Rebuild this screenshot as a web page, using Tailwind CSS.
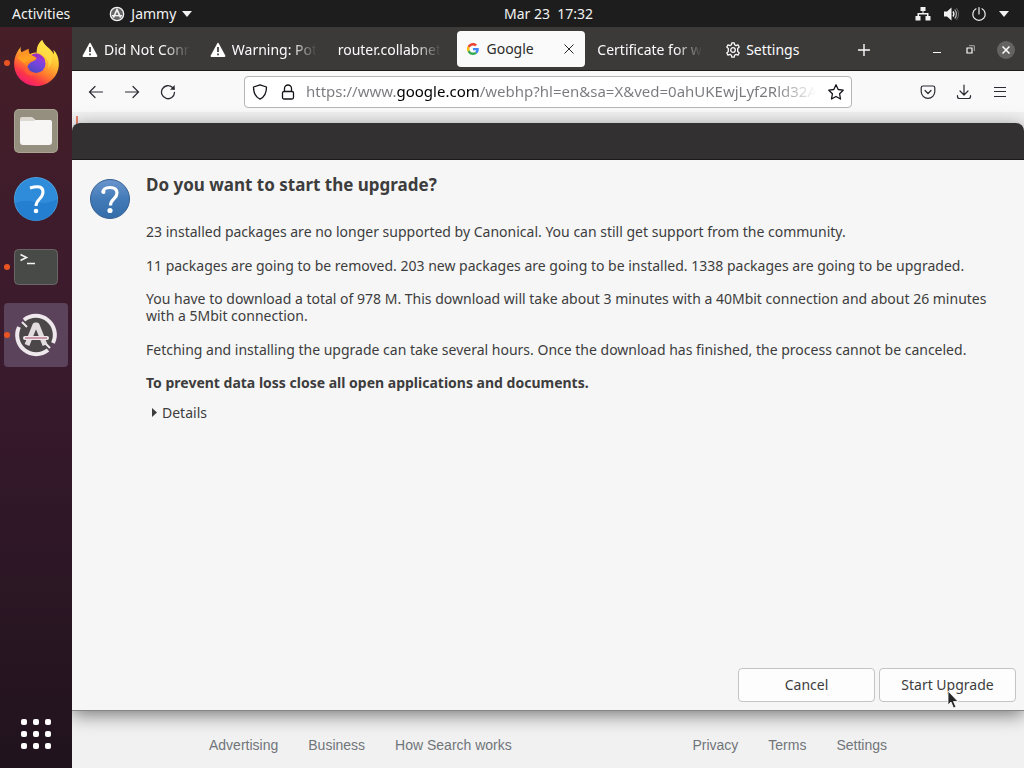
<!DOCTYPE html>
<html lang="en">
<head>
  <meta charset="UTF-8" />
  <meta name="viewport" content="width=device-width, initial-scale=1" />
  <title>Jammy upgrade</title>
  <script src="https://cdn.jsdelivr.net/npm/@tailwindcss/browser@4"></script>
</head>
<body class="flex h-screen flex-col overflow-hidden bg-[#1d1d1d] font-['Noto_Sans',sans-serif] text-sm text-[#3d3d3d]">

  <!-- Top panel -->
  <header class="relative flex h-[27px] shrink-0 items-center justify-between bg-[#1d1d1d] px-3 text-[#f2f2f2]">
    <div class="flex items-center gap-[39px]">
      <button>Activities</button>
      <button class="flex items-center gap-1.5">
        <svg class="size-4" viewBox="0 0 48 48" fill="none" stroke="currentColor">
          <circle cx="24" cy="24" r="20" fill="#666" stroke-width="4" />
          <path d="M13 35 24 11l11 24" stroke-width="5" />
          <path d="M9 29h30" stroke-width="4" />
        </svg>
        <span>Jammy</span>
        <svg class="h-[6px] w-[10px]" viewBox="0 0 10 6" fill="currentColor"><path d="M0 0h10L5 6z" /></svg>
      </button>
    </div>
    <button class="absolute left-1/2 -translate-x-1/2 whitespace-pre pl-[73px]">Mar 23  17:32</button>
    <div class="flex items-center gap-3 pr-[3px]">
      <svg class="size-4" viewBox="0 0 16 16" fill="currentColor" aria-label="Network">
        <path d="M5.500 1h5v4h-2v2h5v3h2v4.500h-5V10H12V8.500H4V10h1.500v4.500h-5V10h2V7h5V5h-2z" />
      </svg>
      <svg class="size-4" viewBox="0 0 16 16" aria-label="Volume">
        <path d="M1 5.500h3L8.500 1.500v13L4 10.500H1z" fill="currentColor" />
        <path d="M10 5.500q1.800 2.500 0 5" fill="none" stroke="currentColor" stroke-width="1.400" />
        <path d="M11.800 3.500q3.200 4.500 0 9" fill="none" stroke="#bbb" stroke-width="1.200" />
        <path d="M13.500 2q4 6 0 12" fill="none" stroke="#666" />
      </svg>
      <svg class="size-4" viewBox="0 0 16 16" fill="none" stroke="currentColor" stroke-width="1.200" stroke-linecap="round" aria-label="Power">
        <path d="M8 1.500V8M5 2.800a6.200 6.200 0 1 0 6 0" />
      </svg>
      <svg class="h-[6px] w-[10px]" viewBox="0 0 10 6" fill="currentColor"><path d="M0 0h10L5 6z" /></svg>
    </div>
  </header>

  <div class="flex min-h-0 flex-1">
    <!-- Dock -->
    <nav class="flex w-[72px] shrink-0 flex-col items-center justify-between bg-linear-to-b from-[#451e27] via-[#3a1a2e] via-45% to-[#20131d] pt-1 pb-4">
      <div class="flex flex-col gap-1">
        <button class="relative flex size-16 items-center justify-center" aria-label="Firefox">
          <span class="absolute top-[29px] left-0 size-[6px] rounded-full bg-[#e95420]"></span>
          <svg class="h-[46px] w-[45px]" viewBox="0 0 134 138">
            <defs>
              <linearGradient id="fx" x1="0.85" y1="0.1" x2="0.35" y2="0.98">
                <stop offset="0" stop-color="#fff14a" />
                <stop offset="0.35" stop-color="#ffc132" />
                <stop offset="0.65" stop-color="#ff762d" />
                <stop offset="0.85" stop-color="#fc354a" />
                <stop offset="1" stop-color="#f5206a" />
              </linearGradient>
              <linearGradient id="ball" x1="0.8" y1="0" x2="0.3" y2="1">
                <stop offset="0" stop-color="#b033d8" />
                <stop offset="0.5" stop-color="#7446dc" />
                <stop offset="1" stop-color="#4d47bd" />
              </linearGradient>
              <linearGradient id="head" x1="0.2" y1="0" x2="0.5" y2="1">
                <stop offset="0" stop-color="#ff8a25" />
                <stop offset="0.6" stop-color="#ffa321" />
                <stop offset="1" stop-color="#ff652c" />
              </linearGradient>
            </defs>
            <path fill="url(#fx)" d="M20 20C6 37 0 54 0 73c0 37 30 65 67 65s67-29 67-66c0-19-6-34-17-43 2 6 3 10 2 14C112 26 92 20 84 0 72 10 67 24 68 38c-10-1-18 2-24 7l-22-8c-3-5-3-11-2-17z" />
            <path fill="#ffe04a" d="M84 0C72 10 67 25 68 38c9 1 16 4 21 10 13 10 17 24 13 38 16-20 14-38 7-49C101 24 88 14 84 0z" opacity=".65" />
            <circle cx="66" cy="71" r="28" fill="url(#ball)" />
            <path fill="#9a30c6" d="M50 47c12-13 37-5 43 15-9-9-19-9-28-6-9-1-14-4-15-9z" />
            <path fill="url(#head)" d="M9 55c5-9 11-17 16-20 6-3 11-6 19-9-1 7 1 12 3 16 7 5 15 8 20 11-1 8-8 9-16 13-5 3-10 9-13 19-4-13-14-20-29-30z" />
            <path fill="#ff6a2c" d="M38 80c4 16 19 24 36 20-9 8-31 10-41-3-4-6-1-13 5-17z" opacity=".5" />
          </svg>
        </button>
        <button class="flex size-16 items-center justify-center" aria-label="Files">
          <svg class="size-11" viewBox="0 0 44 44">
            <rect width="44" height="44" rx="5" fill="#aaa592" />
            <rect x="1" y="1" width="42" height="42" rx="4" fill="#948f7f" />
            <path d="M6 10q0-2 2-2h9q2 0 3 1.500l2 2H37v18H6z" fill="#ddd9d0" />
            <path d="M6 12h13l3-1h14q2 0 2 2v20q0 3-3 3H9q-3 0-3-3z" fill="#f8f6f5" />
          </svg>
        </button>
        <button class="flex size-16 items-center justify-center" aria-label="Help">
          <svg class="size-11" viewBox="0 0 44 44">
            <circle cx="22" cy="22" r="22" fill="#4fa6e6" />
            <circle cx="22" cy="22.500" r="21.200" fill="#257fd0" />
            <path d="M1 22a21 21 0 0 1 42 0q-11 6-22 3T1 26z" fill="#2f8cdb" />
            <path d="M16 11q13-4 13 4c0 7-7 7-7 14" fill="none" stroke="#fff" stroke-width="3" />
            <circle cx="22" cy="34" r="2.300" fill="#fff" />
          </svg>
        </button>
        <button class="relative flex size-16 items-center justify-center" aria-label="Terminal">
          <span class="absolute top-[29px] left-0 size-[6px] rounded-full bg-[#e95420]"></span>
          <svg class="h-9 w-11" viewBox="0 0 44 36" fill="none">
            <rect x=".5" y=".5" width="43" height="35" rx="4" fill="#484a48" stroke="#6a6667" />
            <path d="m6.500 5.500 6 3-6 3M13 14.500h8" stroke="#f3f3f3" stroke-width="1.600" />
          </svg>
        </button>
        <button class="relative flex size-16 items-center justify-center rounded bg-[#5b435b]" aria-label="Software Updater">
          <span class="absolute top-[29px] left-0 size-[6px] rounded-full bg-[#e95420]"></span>
          <svg class="size-11" viewBox="0 0 44 44" fill="none">
            <circle cx="22" cy="22" r="18" fill="#4b4749" />
            <path d="M10 7a19 19 0 0 1 29 23M34 37A19 19 0 0 1 5 14" stroke="#eee8ec" stroke-width="4" />
            <path d="m8 9 5 5M36 35l-5-5" stroke="#eee8ec" stroke-width="2" />
            <path d="m13 32 8-20h2l8 20" stroke="#e2dcdf" stroke-width="5" stroke-linejoin="round" />
            <path d="M11 25h22" stroke="#eee8ec" stroke-width="4" stroke-linecap="round" />
            <path d="M11 25h22" stroke="#a8475c" />
          </svg>
        </button>
      </div>
      <button class="grid grid-cols-3 gap-[6px] p-[3px]" aria-label="Show Applications">
        <span class="size-[6px] rounded-[2px] bg-white"></span>
        <span class="size-[6px] rounded-[2px] bg-white"></span>
        <span class="size-[6px] rounded-[2px] bg-white"></span>
        <span class="size-[6px] rounded-[2px] bg-white"></span>
        <span class="size-[6px] rounded-[2px] bg-white"></span>
        <span class="size-[6px] rounded-[2px] bg-white"></span>
        <span class="size-[6px] rounded-[2px] bg-white"></span>
        <span class="size-[6px] rounded-[2px] bg-white"></span>
        <span class="size-[6px] rounded-[2px] bg-white"></span>
      </button>
    </nav>

    <!-- Browser window -->
    <main class="relative flex min-w-0 flex-1 flex-col overflow-hidden bg-[#f1f1f1]">
      <div class="flex h-11 shrink-0 border-b border-[#1c1c1c] bg-[#3b3a39] pt-[2px] text-[#fbfbfe]">
        <div class="flex min-w-0 flex-1">
          <button class="flex min-w-0 flex-1 items-center gap-1.5 px-2.5">
            <svg class="size-4 shrink-0" viewBox="0 0 16 16"><path d="M8 1.800 14.500 14h-13z" fill="#fff" stroke="#fff" stroke-width="1.800" stroke-linejoin="round" /><path d="M8 5v5M8 11.500v1.700" stroke="#3b3a39" stroke-width="1.700" /></svg>
            <span class="overflow-hidden whitespace-nowrap mask-r-from-70%">Did Not Conn</span>
          </button>
          <button class="flex min-w-0 flex-1 items-center gap-1.5 px-2.5">
            <svg class="size-4 shrink-0" viewBox="0 0 16 16"><path d="M8 1.800 14.500 14h-13z" fill="#fff" stroke="#fff" stroke-width="1.800" stroke-linejoin="round" /><path d="M8 5v5M8 11.500v1.700" stroke="#3b3a39" stroke-width="1.700" /></svg>
            <span class="overflow-hidden whitespace-nowrap mask-r-from-70%">Warning: Pot</span>
          </button>
          <button class="flex min-w-0 flex-1 items-center px-2.5">
            <span class="overflow-hidden whitespace-nowrap mask-r-from-75%">router.collabnet</span>
          </button>
          <div class="mx-[2px] mt-[2px] mb-[3px] flex min-w-0 flex-1 items-center rounded bg-[#fafafa] px-2.5 text-[#2b2b2b]">
            <button class="flex flex-1 items-center gap-[7px]">
              <svg class="size-3" viewBox="0 0 48 48">
                <path fill="#EA4335" d="M24 9.500c3.540 0 6.710 1.220 9.210 3.600l6.850-6.850C35.900 2.380 30.470 0 24 0 14.620 0 6.510 5.380 2.560 13.220l7.980 6.190C12.430 13.720 17.740 9.500 24 9.500z" />
                <path fill="#4285F4" d="M46.980 24.550c0-1.570-.15-3.090-.38-4.550H24v9.020h12.940c-.58 2.960-2.260 5.480-4.780 7.180l7.730 6c4.510-4.180 7.090-10.360 7.090-17.650z" />
                <path fill="#FBBC05" d="M10.530 28.590a14.500 14.500 0 0 1 0-9.180l-7.980-6.190a24 24 0 0 0 0 21.560z" />
                <path fill="#34A853" d="M24 48c6.480 0 11.930-2.130 15.890-5.810l-7.730-6c-2.150 1.450-4.920 2.300-8.160 2.300-6.260 0-11.570-4.220-13.470-9.910l-7.980 6.190C6.510 42.620 14.620 48 24 48z" />
              </svg>
              <span>Google</span>
            </button>
            <button class="flex w-3 items-center justify-center" aria-label="Close tab">
              <svg class="size-[10px]" viewBox="0 0 10 10" stroke="currentColor"><path d="m.5.5 9 9M9.500.5l-9 9" /></svg>
            </button>
          </div>
          <button class="flex min-w-0 flex-1 items-center px-2.5">
            <span class="overflow-hidden whitespace-nowrap mask-r-from-75%">Certificate for w</span>
          </button>
          <button class="flex min-w-0 flex-1 items-center gap-[5px] px-2.5">
            <svg class="size-4" viewBox="0 0 16 16" fill="none" stroke="currentColor" stroke-width="1.300" stroke-linejoin="round">
              <path d="M6.800.8h2.400l.4 2 1.400.8 2-.7 1.200 2.100-1.500 1.400v3.200l1.500 1.400-1.200 2.100-2-.7-1.400.8-.4 2H6.800l-.4-2-1.400-.8-2 .7L1.800 11l1.500-1.400V6.400L1.800 5 3 2.900l2 .7 1.400-.8z" />
              <circle cx="8" cy="8" r="2.300" />
            </svg>
            <span>Settings</span>
          </button>
        </div>
        <div class="flex w-[181px] shrink-0 items-center justify-between pr-[9px] pl-[13px]">
          <button class="flex size-4 items-center justify-center" aria-label="New tab">
            <svg class="size-3" viewBox="0 0 12 12" stroke="currentColor" stroke-width="1.400"><path d="M6 0v12M0 6h12" /></svg>
          </button>
          <div class="flex items-center gap-[24px]">
            <button class="flex h-4 w-[10px] items-center" aria-label="Minimize">
              <svg class="size-[10px]" viewBox="0 0 10 10" stroke="currentColor"><path d="M1 7.500h8" /></svg>
            </button>
            <button class="flex h-4 w-[10px] items-center" aria-label="Restore">
              <svg class="size-[9px]" viewBox="0 0 9 9" fill="none" stroke="currentColor"><path d="M1 3h5v5H1z" stroke-width="1.200" /><path d="M3 .7h5.300V6" stroke="#aaa" /></svg>
            </button>
            <button class="-ml-[3px] flex size-[18px] items-center justify-center rounded-full bg-[#646362]" aria-label="Close">
              <svg class="size-2" viewBox="0 0 8 8" stroke="#fff" stroke-width="1.500"><path d="m.5.5 7 7M7.500.5l-7 7" /></svg>
            </button>
          </div>
        </div>
      </div>

      <div class="flex h-[41px] shrink-0 items-center bg-[#f9f9fa] px-1.5 text-[#2b2a33]">
        <button class="flex w-9 justify-center" aria-label="Back">
          <svg class="size-4" viewBox="0 0 16 16" fill="none" stroke="currentColor" stroke-width="1.200" stroke-linecap="round"><path d="M1.500 8h13M7 2.500 1.500 8 7 13.500" /></svg>
        </button>
        <button class="flex w-9 justify-center" aria-label="Forward">
          <svg class="size-4" viewBox="0 0 16 16" fill="none" stroke="currentColor" stroke-width="1.200" stroke-linecap="round"><path d="M14.500 8h-13M9 2.500 14.500 8 9 13.500" /></svg>
        </button>
        <button class="flex w-9 justify-center" aria-label="Reload">
          <svg class="size-4" viewBox="0 0 16 16" fill="none" stroke="currentColor" stroke-width="1.300" stroke-linecap="round"><path d="M14.500 8.500A6.500 6.500 0 1 1 12.500 3.500L14 5" /><path d="M14.700 1v4.700H10z" fill="currentColor" stroke="none" /></svg>
        </button>
        <form class="mx-[58px] flex h-8 min-w-0 flex-1 items-center rounded border border-[#b5b5b8] bg-white px-[7px] text-[#15141a]">
          <svg class="size-4 shrink-0" viewBox="0 0 16 16" fill="none" stroke="currentColor" stroke-width="1.300" stroke-linejoin="round"><path d="M8 .8 14.500 3c0 6-2 10-6.500 12.200C3.500 13 1.500 9 1.500 3z" /></svg>
          <svg class="ml-3 size-4 shrink-0" viewBox="0 0 16 16" fill="none" stroke="currentColor" stroke-width="1.300"><rect x="2.500" y="7.500" width="11" height="7.500" rx="1.500" /><path d="M4.500 7.500V4.500a3.500 3.500 0 0 1 7 0v3" /></svg>
          <input type="text" aria-label="Address" class="mr-3 ml-[10px] min-w-0 flex-1 bg-[linear-gradient(90deg,#7a7a7e_90px,#000_90px,#000_174px,#7a7a7e_174px,#7a7a7e_470px,#ffffff_510px)] bg-clip-text text-[15px] text-transparent outline-none" value="https://www.google.com/webhp?hl=en&amp;sa=X&amp;ved=0ahUKEwjLyf2Rld32A" />
          <button type="button" aria-label="Bookmark">
            <svg class="size-4" viewBox="0 0 16 16" fill="none" stroke="currentColor" stroke-width="1.300" stroke-linejoin="round"><path d="m8 .8 2.200 4.700 5 .7-3.600 3.600.9 5.200L8 12.500 3.500 15l.9-5.200L.8 6.200l5-.7z" /></svg>
          </button>
        </form>
        <button class="flex w-9 justify-center" aria-label="Save to Pocket">
          <svg class="size-4" viewBox="0 0 16 16" fill="none" stroke="currentColor" stroke-width="1.200" stroke-linecap="round" stroke-linejoin="round"><path d="M3 2h10q1.800 0 1.800 1.800V7.500a6.800 6.800 0 0 1-13.600 0V3.800Q1.200 2 3 2zM5 6.500l3 3 3-3" /></svg>
        </button>
        <button class="flex w-9 justify-center" aria-label="Downloads">
          <svg class="size-4" viewBox="0 0 16 16" fill="none" stroke="currentColor" stroke-width="1.200" stroke-linecap="round" stroke-linejoin="round"><path d="M8 1v10M4 7l4 4 4-4M1.500 11.500v1q0 2 2 2h9q2 0 2-2v-1" /></svg>
        </button>
        <button class="flex w-9 justify-center" aria-label="Menu">
          <svg class="size-4" viewBox="0 0 16 16" stroke="currentColor" stroke-width="1.100"><path d="M2 3.500h12M2 7.500h12M2 12.500h12" /></svg>
        </button>
      </div>

      <!-- Sliver of the page that shows above the dialog -->
      <div class="flex h-3 items-end pl-1">
        <span class="h-2 w-[2px] bg-[#e8826c]"></span>
      </div>

      <footer class="mt-auto flex h-[57px] items-center justify-between pt-2.5 pr-[137px] pl-[137px] font-['Liberation_Sans',sans-serif] text-[#70757a]">
        <div class="flex gap-[30px]">
          <a href="#">Advertising</a>
          <a href="#">Business</a>
          <a href="#">How Search works</a>
        </div>
        <div class="flex gap-[30px]">
          <a href="#">Privacy</a>
          <a href="#">Terms</a>
          <a href="#">Settings</a>
        </div>
      </footer>

      <!-- Upgrade dialog, floats over the browser -->
      <section role="dialog" aria-labelledby="dialog-title" class="absolute inset-x-0 top-24 bottom-[57px] flex flex-col rounded-t-lg border-b border-[#858585] bg-[#f6f6f6] shadow-[0_4px_18px_rgba(0,0,0,0.5)]">
        <div class="h-[37px] shrink-0 rounded-t-lg border-b border-[#1a1a1a] bg-[#323030]"></div>
        <div class="flex flex-1 gap-4 px-[18px] pt-4">
          <svg class="mt-[3px] size-10 shrink-0" viewBox="0 0 40 40">
            <defs>
              <linearGradient id="q" x1="0" y1="0" x2="0" y2="1">
                <stop offset="0" stop-color="#6b95cd" />
                <stop offset="0.5" stop-color="#427bb8" />
                <stop offset="1" stop-color="#336da9" />
              </linearGradient>
            </defs>
            <circle cx="20" cy="20" r="19.500" fill="url(#q)" stroke="#365f91" />
            <path d="M13 13.500q0-5 7-5t7 5.500c0 6-6.500 6-6.500 12.500" fill="none" stroke="#fff" stroke-width="3.200" />
            <circle cx="13.500" cy="13" r="2" fill="#fff" />
            <circle cx="20" cy="31.500" r="2.600" fill="#fff" />
          </svg>
          <div class="min-w-0 flex-1 leading-[17px]">
            <h1 id="dialog-title" class="mb-[29px] text-[17px] leading-[18px] font-bold">Do you want to start the upgrade?</h1>
            <p class="mb-[17px]">23 installed packages are no longer supported by Canonical. You can still get support from the community.</p>
            <p class="mb-4">11 packages are going to be removed. 203 new packages are going to be installed. 1338 packages are going to be upgraded.</p>
            <p class="mb-[17px]">You have to download a total of 978 M. This download will take about 3 minutes with a 40Mbit connection and about 26 minutes with a 5Mbit connection.</p>
            <p class="mb-4">Fetching and installing the upgrade can take several hours. Once the download has finished, the process cannot be canceled.</p>
            <p class="mb-[13px] font-bold">To prevent data loss close all open applications and documents.</p>
            <details>
              <summary class="flex list-none items-center gap-[5px] pl-1.5">
                <svg class="h-[9px] w-[5px]" viewBox="0 0 5 9" fill="currentColor"><path d="M0 0v9l5-4.500z" /></svg>
                <span>Details</span>
              </summary>
            </details>
          </div>
        </div>
        <div class="flex justify-end gap-1 p-2">
          <button class="h-[34px] w-[137px] rounded border border-[#c4c4c4] bg-[#fdfdfd]">Cancel</button>
          <button class="h-[34px] w-[137px] rounded border border-[#c4c4c4] bg-[#fdfdfd]">Start Upgrade</button>
        </div>
        <!-- Mouse pointer -->
        <svg class="absolute right-[65px] bottom-[1px] h-[19px] w-3" viewBox="0 0 12 19"><path d="M1 1v14l3-3 2.500 6 2.500-1-2.500-5.500h4.500z" fill="#262626" stroke="#fff" stroke-width=".8" /></svg>
      </section>
    </main>
  </div>
</body>
</html>
